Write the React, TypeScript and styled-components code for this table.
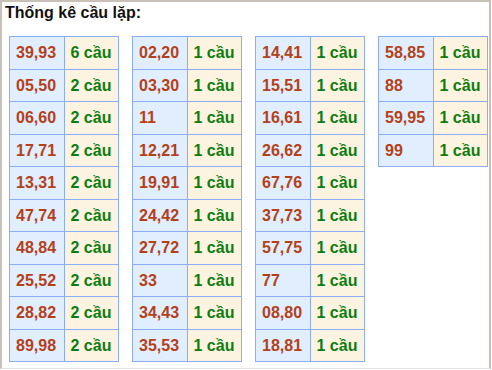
import React from 'react';
import styled, { createGlobalStyle } from 'styled-components';

const GlobalStyle = createGlobalStyle`
  body {
    margin: 0;
    background: #ffffff;
    font-family: 'Liberation Sans', Arial, sans-serif;
  }
`;

const StyledBox = styled.div`
  box-sizing: border-box;
  width: 491px;
  height: 369px;
  border-top: 2px solid #c9c1b8;
  border-left: 2px solid #c9c1b8;
  border-right: 2px solid #c9c1b8;
  border-bottom: 1px solid #e4e4e4;
  padding: 2px 0 0 7px;
  background: #ffffff;
`;

const Title = styled.div`
  font-size: 16px;
  font-weight: 700;
  color: #111;
  line-height: 18px;
  margin-left: -4px;
  margin-bottom: 14px;
`;

const Tables = styled.div`
  display: flex;
  align-items: flex-start;
  gap: 13px;
`;

const Table = styled.table`
  width: 110px;
  border-collapse: collapse;
  table-layout: fixed;
  font-size: 16px;
  font-weight: 700;
`;

const Cell = styled.td<{ $kind: 'pair' | 'count' }>`
  border: 1px solid #8cadf5;
  padding: 7px 0 7px 6px;
  height: 17.5px;
  line-height: 17.5px;
  white-space: nowrap;
  background: ${(p) => (p.$kind === 'pair' ? '#e1eefd' : '#fdf3e1')};
  color: ${(p) => (p.$kind === 'pair' ? '#b4401a' : '#0d7d12')};
`;

const columns: [string, string][][] = [
  [
    ['39,93', '6 cầu'],
    ['05,50', '2 cầu'],
    ['06,60', '2 cầu'],
    ['17,71', '2 cầu'],
    ['13,31', '2 cầu'],
    ['47,74', '2 cầu'],
    ['48,84', '2 cầu'],
    ['25,52', '2 cầu'],
    ['28,82', '2 cầu'],
    ['89,98', '2 cầu'],
  ],
  [
    ['02,20', '1 cầu'],
    ['03,30', '1 cầu'],
    ['11', '1 cầu'],
    ['12,21', '1 cầu'],
    ['19,91', '1 cầu'],
    ['24,42', '1 cầu'],
    ['27,72', '1 cầu'],
    ['33', '1 cầu'],
    ['34,43', '1 cầu'],
    ['35,53', '1 cầu'],
  ],
  [
    ['14,41', '1 cầu'],
    ['15,51', '1 cầu'],
    ['16,61', '1 cầu'],
    ['26,62', '1 cầu'],
    ['67,76', '1 cầu'],
    ['37,73', '1 cầu'],
    ['57,75', '1 cầu'],
    ['77', '1 cầu'],
    ['08,80', '1 cầu'],
    ['18,81', '1 cầu'],
  ],
  [
    ['58,85', '1 cầu'],
    ['88', '1 cầu'],
    ['59,95', '1 cầu'],
    ['99', '1 cầu'],
  ],
];

const App: React.FC = () => {
  return (
    <>
      <GlobalStyle />
      <StyledBox>
        <Title>Thống kê cầu lặp:</Title>
        <Tables>
          {columns.map((rows, i) => (
            <Table key={i}>
              <tbody>
                {rows.map(([pair, count]) => (
                  <tr key={pair}>
                    <Cell $kind='pair'>{pair}</Cell>
                    <Cell $kind='count'>{count}</Cell>
                  </tr>
                ))}
              </tbody>
            </Table>
          ))}
        </Tables>
      </StyledBox>
    </>
  );
};

export default App;
